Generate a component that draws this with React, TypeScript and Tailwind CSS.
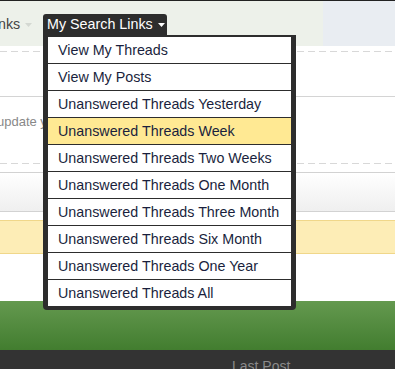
import React from "react";

const items = [
  "View My Threads",
  "View My Posts",
  "Unanswered Threads Yesterday",
  "Unanswered Threads Week",
  "Unanswered Threads Two Weeks",
  "Unanswered Threads One Month",
  "Unanswered Threads Three Month",
  "Unanswered Threads Six Month",
  "Unanswered Threads One Year",
  "Unanswered Threads All",
];

function Caret({ color }: { color: string }) {
  return (
    <svg width="7" height="4" viewBox="0 0 7 4" className="ml-[5px] mt-[1px]">
      <path d="M0 0 L7 0 L3.5 4 Z" fill={color} />
    </svg>
  );
}

function Dashed() {
  return (
    <div className="h-px bg-[repeating-linear-gradient(to_right,#d8d8d8_0px,#d8d8d8_7px,transparent_7px,transparent_11px)]" />
  );
}

export default function App() {
  return (
    <div className="relative w-[395px] h-[369px] overflow-hidden bg-white font-['Liberation_Sans',Arial,sans-serif]">
      <div className="h-px bg-[#222]" />
      {/* nav */}
      <div className="flex h-[45px]">
        <div className="flex-1 bg-[#edf1ea] flex items-start pt-[13px]">
          <div className="flex items-center h-[21px] w-[43px] text-[14.3px] text-[#444] -ml-[1px] pl-0 whitespace-nowrap">
            <span className="-ml-[1px]">nks</span>
            <Caret color="#d4d8d2" />
          </div>
          <div className="ml-[1px] flex items-center h-[21px] w-[124px] bg-[#2d2d2d] rounded-t-[3px] pl-[4px] text-[14.3px] text-white whitespace-nowrap">
            My Search Links
            <Caret color="#ffffff" />
          </div>
        </div>
        <div className="w-[72px] bg-[#e9edf2]" />
      </div>
      <div className="h-[5px]" />
      <Dashed />
      <div className="h-[44px]" />
      <div className="h-px bg-[#d4d4d4]" />
      <div className="h-[66px] pt-[15px] text-[13px] text-[#888] -ml-[3px] whitespace-nowrap">
        update your
      </div>
      <Dashed />
      <div className="h-[8px]" />
      <div className="h-px bg-[#d2d2d2]" />
      <div className="h-[38px] bg-gradient-to-b from-[#ffffff] to-[#efefef]" />
      <div className="h-px bg-[#d2d2d2]" />
      <div className="h-[8px]" />
      <div className="h-[34px] bg-[#fdedb6] border-t border-b border-[#f0d78a]" />
      <div className="h-[47px]" />
      <div className="h-[49px] bg-gradient-to-b from-[#64994f] to-[#427d2f]" />
      <div className="h-[19px] bg-[#333333] pl-[232px] pt-[9px] text-[14px] leading-[15px] text-[#8a8a8a] whitespace-nowrap">
        Last Post
      </div>

      {/* dropdown */}
      <div className="absolute left-[43px] top-[35px] w-[253px] bg-[#2d2d2d] pt-[2px] pl-[5px] pr-[5px] pb-[4px] rounded-b-[4px]">
        <div className="bg-white flex flex-col">
          {items.map((t, i) => (
            <div
              key={t}
              className={
                (i === 3 ? "bg-[#ffe993] " : "bg-white ") +
                (i < items.length - 1 ? "border-b border-[#2d2d2d] h-[27px] " : "h-[26px] ") +
                "pl-[10px] pt-px text-[14.3px] leading-[25px] text-[#1a1f3d] whitespace-nowrap overflow-hidden"
              }
            >
              {t}
            </div>
          ))}
        </div>
      </div>
    </div>
  );
}
